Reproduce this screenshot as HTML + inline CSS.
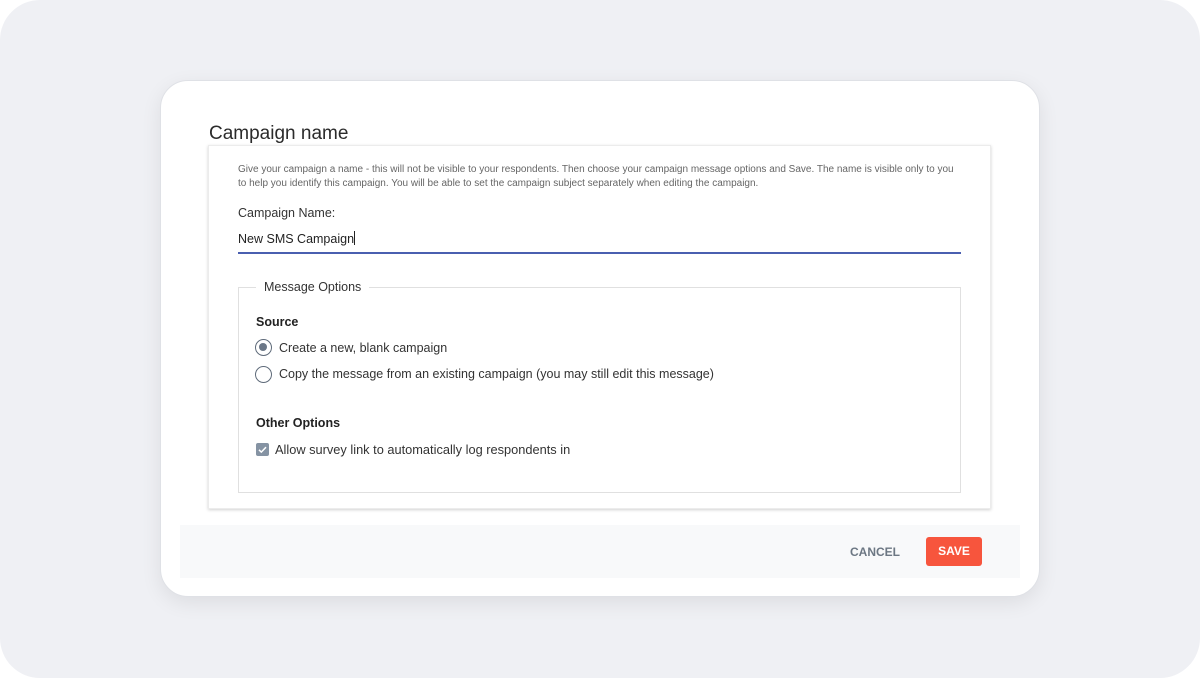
<!DOCTYPE html>
<html><head><meta charset="utf-8"><style>
*{margin:0;padding:0;box-sizing:border-box}
html,body{width:1200px;height:678px;background:#fff;overflow:hidden;font-family:"Liberation Sans",sans-serif}
.bg{position:absolute;left:0;top:0;width:1200px;height:678px;background:#eff0f4;border-radius:40px}
.card{position:absolute;left:160px;top:80px;width:880px;height:517px;background:#fff;border-radius:28px;border:1px solid #dfe1e6;box-shadow:0 6px 20px rgba(0,0,0,.08)}
.title{position:absolute;left:209px;top:123px;font-size:19px;color:#2b2b2b}
.panel{position:absolute;left:208px;top:145px;width:783px;height:364px;background:#fff;border:1px solid #ececec;box-shadow:0 1px 3px rgba(0,0,0,.18)}
.desc{position:absolute;left:238px;top:163px;width:722px;font-size:10px;line-height:14px;color:#666}
.lbl{position:absolute;left:238px;top:206px;font-size:12.5px;color:#333}
.inp{position:absolute;left:238px;top:231px;font-size:12.5px;color:#222}
.caret{display:inline-block;width:1px;height:14px;background:#222;vertical-align:-2px}
.line{position:absolute;left:238px;top:252px;width:723px;height:2px;background:#4a5fb0}
.fs{position:absolute;left:238px;top:287px;width:723px;height:206px;border:1px solid #e0e0e0}
.leg{position:absolute;left:256px;top:280px;background:#fff;padding:0 8px;font-size:12.5px;color:#333}
.h{position:absolute;left:256px;font-size:12.5px;font-weight:bold;color:#222}
.opt{position:absolute;left:279px;font-size:12.5px;color:#333}
.radio{position:absolute;left:255px;width:17px;height:17px;border:1.5px solid #5f6b7a;border-radius:50%}
.radio.on::after{content:"";position:absolute;left:3px;top:3px;width:8px;height:8px;border-radius:50%;background:#6b7787}
.cb{position:absolute;left:256px;top:443px;width:13px;height:13px;background:#8593a3;border-radius:2px}
.foot{position:absolute;left:180px;top:525px;width:840px;height:53px;background:#f8f9fa}
.cancel{position:absolute;left:850px;top:545px;font-size:12px;font-weight:bold;color:#6c7783;letter-spacing:0}
.save{position:absolute;left:926px;top:537px;width:56px;height:29px;background:#f7553d;border-radius:3px;color:#fff;font-size:12px;font-weight:bold;text-align:center;line-height:29px}
</style></head><body>
<div class="bg"></div>
<div class="card"></div>
<div class="title">Campaign name</div>
<div class="panel"></div>
<div class="desc">Give your campaign a name - this will not be visible to your respondents. Then choose your campaign message options and Save. The name is visible only to you to help you identify this campaign. You will be able to set the campaign subject separately when editing the campaign.</div>
<div class="lbl">Campaign Name:</div>
<div class="inp">New SMS Campaign<span class="caret"></span></div>
<div class="line"></div>
<div class="fs"></div>
<div class="leg">Message Options</div>
<div class="h" style="top:315px">Source</div>
<div class="radio on" style="top:339px"></div>
<div class="opt" style="top:341px">Create a new, blank campaign</div>
<div class="radio" style="top:366px"></div>
<div class="opt" style="top:367px">Copy the message from an existing campaign (you may still edit this message)</div>
<div class="h" style="top:416px">Other Options</div>
<div class="cb"><svg width="13" height="13" viewBox="0 0 13 13"><path d="M3 6.8l2.3 2.3L10 4.2" stroke="#fff" stroke-width="1.5" fill="none"/></svg></div>
<div class="opt" style="top:442px;left:275px;font-size:12.8px">Allow survey link to automatically log respondents in</div>
<div class="foot"></div>
<div class="cancel">CANCEL</div>
<div class="save">SAVE</div>
</body></html>
